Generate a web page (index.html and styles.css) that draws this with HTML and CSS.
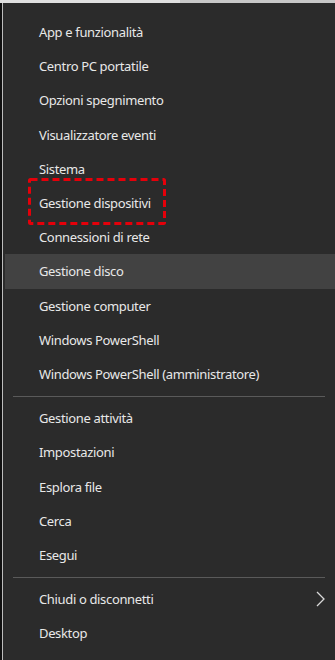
FILE: index.html
```html
<!DOCTYPE html>
<html lang="it">
<head>
    <meta charset="UTF-8">
    <meta name="viewport" content="width=device-width, initial-scale=1.0">
    <title>Menu Win+X</title>
    <link rel="stylesheet" href="styles.css">
</head>
<body>
    <div class="topbar"></div>
    <div class="screen">
        <div class="menu">
            <div class="group">
                <div class="item">App e funzionalità</div>
                <div class="item">Centro PC portatile</div>
                <div class="item">Opzioni spegnimento</div>
                <div class="item">Visualizzatore eventi</div>
                <div class="item">Sistema</div>
                <div class="item marked">
                    <span>Gestione dispositivi</span>
                    <svg class="mark" width="138" height="47" viewBox="0 0 138 47">
                        <rect x="1.5" y="1.5" width="135" height="44" rx="1" fill="none" stroke="#e5000a" stroke-width="3" stroke-dasharray="7 4"/>
                    </svg>
                </div>
                <div class="item">Connessioni di rete</div>
                <div class="item hover">Gestione disco</div>
                <div class="item">Gestione computer</div>
                <div class="item">Windows PowerShell</div>
                <div class="item">Windows PowerShell (amministratore)</div>
            </div>

            <div class="separator"></div>

            <div class="group">
                <div class="item">Gestione attività</div>
                <div class="item">Impostazioni</div>
                <div class="item">Esplora file</div>
                <div class="item">Cerca</div>
                <div class="item">Esegui</div>
            </div>

            <div class="separator"></div>

            <div class="group">
                <div class="item submenu">
                    <span>Chiudi o disconnetti</span>
                    <svg class="chevron" width="9" height="16" viewBox="0 0 9 16">
                        <path d="M1 1l7 7-7 7" fill="none" stroke="#d8d8d8" stroke-width="1.3"/>
                    </svg>
                </div>
                <div class="item">Desktop</div>
            </div>
        </div>
    </div>
</body>
</html>
```

FILE: styles.css
```css
* {
    margin: 0;
    padding: 0;
    box-sizing: border-box;
}

body {
    font-family: "Noto Sans", "Open Sans", sans-serif;
    background-color: #101010;
    height: 660px;
    overflow: hidden;
}

.topbar {
    height: 3px;
    background: linear-gradient(to right, #e0e0e0 0, #e0e0e0 180px, #c8c8c8 180px);
}

.screen {
    height: 657px;
    display: flex;
}

.menu {
    flex: 1;
    margin-left: 2px;
    border-left: 1px solid #bdbdbd;
    background-color: #2b2b2b;
    padding-top: 12px;
}

.group {
    display: flex;
    flex-direction: column;
}

.item {
    height: 34.2px;
    margin-left: 2px;
    padding-left: 34px;
    display: flex;
    align-items: center;
    color: #e8e8e8;
    font-size: 13px;
    letter-spacing: -0.35px;
    position: relative;
}

.item.hover {
    background-color: #424242;
}

.item.submenu {
    justify-content: space-between;
    padding-right: 10px;
}

.mark {
    position: absolute;
    left: 23px;
    top: -8px;
}

.separator {
    height: 10px;
    display: flex;
    align-items: center;
    padding: 0 10px 0 10px;
}

.separator::before {
    content: "";
    flex: 1;
    height: 1px;
    background-color: #5a5a5a;
}
```
